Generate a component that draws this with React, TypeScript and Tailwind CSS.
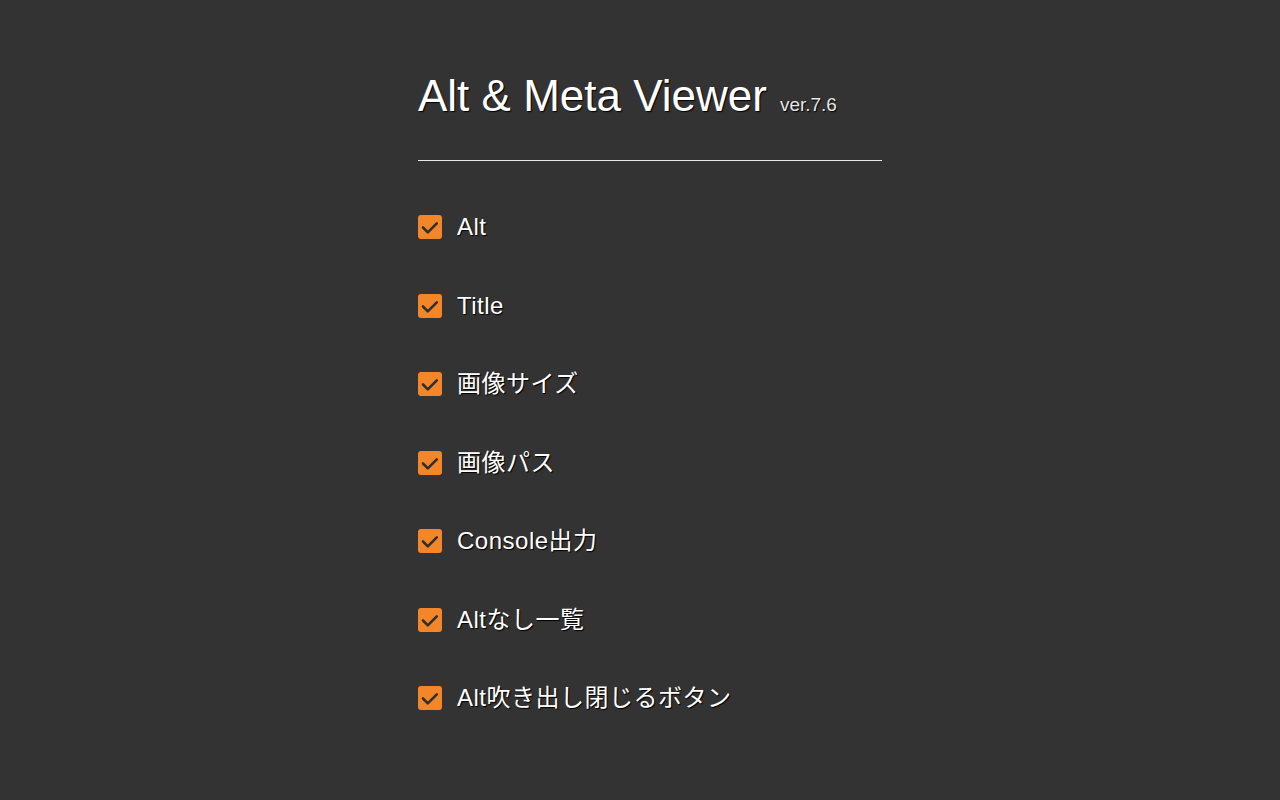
import React from 'react';

const OPTIONS = [
  'Alt',
  'Title',
  '画像サイズ',
  '画像パス',
  'Console出力',
  'Altなし一覧',
  'Alt吹き出し閉じるボタン',
];

const CheckBox = () => (
  <span className="flex h-6 w-6 shrink-0 items-center justify-center rounded-[3px] bg-[#f4862a]">
    <svg viewBox="0 0 24 24" className="h-6 w-6" fill="none" stroke="#2f2f2f" strokeWidth="2.6" strokeLinecap="round" strokeLinejoin="round">
      <path d="M5 12.5l4.8 4.8 9-9" />
    </svg>
  </span>
);

export default function App() {
  return (
    <div
      className="min-h-[800px] bg-[#333333] pl-[20px] text-white"
      style={{ fontFamily: '"Liberation Sans", "Noto Sans CJK JP", sans-serif' }}
    >
      <div className="mx-auto w-[464px] pt-[70px]">
        <h1 className="flex items-baseline gap-[13px] [text-shadow:1px_1px_1px_#000]">
          <span className="text-[44px] font-normal leading-[52px]">Alt &amp; Meta Viewer</span>
          <span className="text-[19px] text-[#e6e6e6]">ver.7.6</span>
        </h1>
        <div className="mt-[38px] h-px bg-[#e8e8e8]" />
        <ul className="mt-[54px] flex flex-col gap-[54.5px]">
          {OPTIONS.map((label) => (
            <li key={label} className="flex h-6 items-center gap-[15px]">
              <CheckBox />
              <span className="text-[24px] leading-6 tracking-[0.5px] [text-shadow:1px_1px_1px_#000]">{label}</span>
            </li>
          ))}
        </ul>
      </div>
    </div>
  );
}
